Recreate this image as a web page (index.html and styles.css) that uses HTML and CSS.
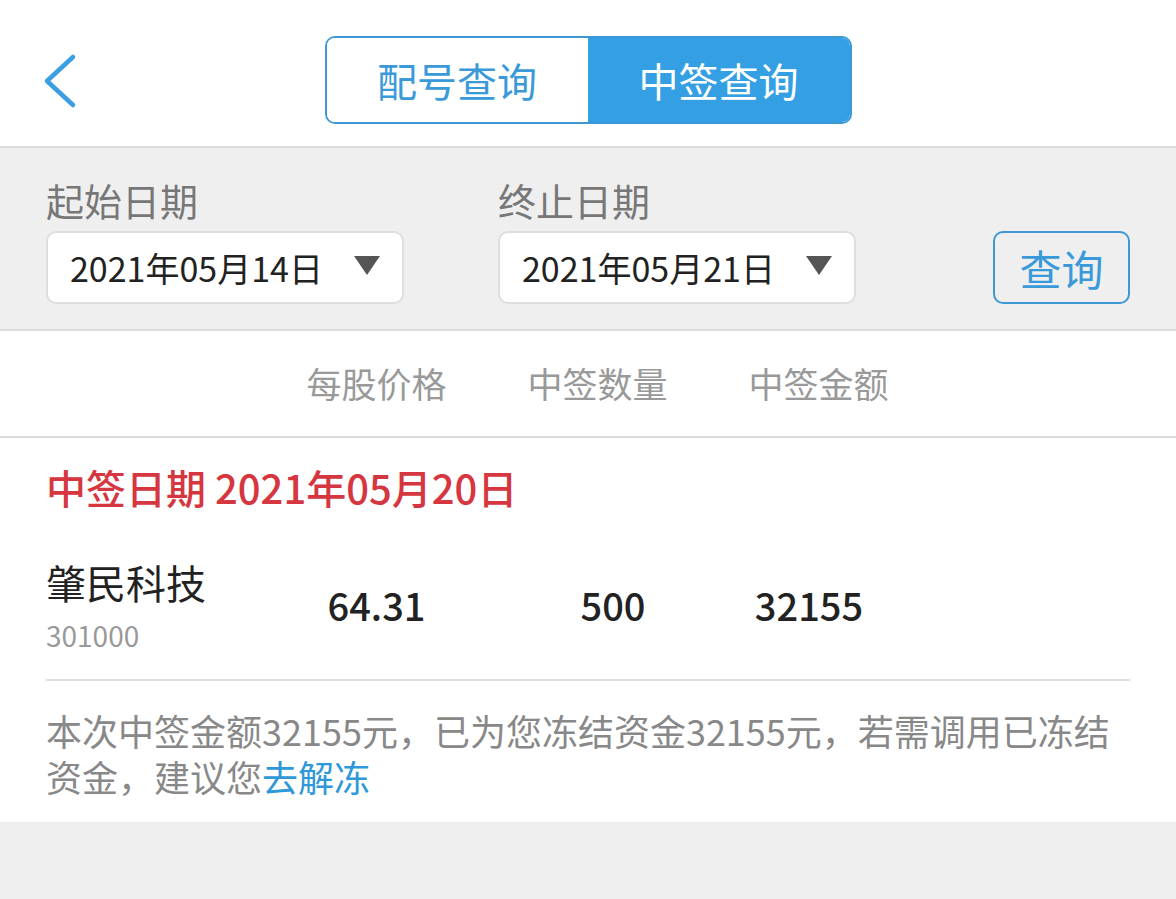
FILE: index.html
```html
<!DOCTYPE html>
<html lang="zh-CN">
<head>
<meta charset="utf-8">
<title>中签查询</title>
<link rel="stylesheet" href="styles.css">
</head>
<body>
<div class="page">
  <header class="topbar">
    <div class="back">
      <svg width="36" height="56" viewBox="0 0 36 56"><polyline points="31,4 5,28 31,52" fill="none" stroke="#3a9ee2" stroke-width="4.5" stroke-linecap="round" stroke-linejoin="round"/></svg>
    </div>
    <div class="seg">
      <div class="seg-item">配号查询</div>
      <div class="seg-item active">中签查询</div>
    </div>
    <div></div>
  </header>

  <section class="filter">
    <div class="field">
      <div class="field-label">起始日期</div>
      <div class="date-box"><span>2021年05月14日</span><i class="tri"></i></div>
    </div>
    <div class="field">
      <div class="field-label">终止日期</div>
      <div class="date-box"><span>2021年05月21日</span><i class="tri"></i></div>
    </div>
    <div class="query-btn">查询</div>
  </section>

  <section class="cols">
    <div></div>
    <div class="col-h">每股价格</div>
    <div class="col-h">中签数量</div>
    <div class="col-h">中签金额</div>
  </section>

  <section class="result">
    <div class="result-date">中签日期 2021年05月20日</div>
    <div class="row">
      <div class="stock">
        <div class="stock-name">肇民科技</div>
        <div class="stock-code">301000</div>
      </div>
      <div class="num">64.31</div>
      <div class="num">500</div>
      <div class="num">32155</div>
    </div>
    <div class="divider"></div>
    <p class="note">本次中签金额32155元，已为您冻结资金32155元，若需调用已冻结资金，建议您<span class="link">去解冻</span></p>
  </section>
</div>
</body>
</html>
```

FILE: styles.css
```css
* { box-sizing: border-box; }
html, body { margin: 0; padding: 0; }
body {
  background: #efefef;
  font-family: "Noto Sans CJK SC", "Noto Sans", sans-serif;
  color: #222;
  width: 1176px;
  height: 899px;
  overflow: hidden;
}
.page { display: flex; flex-direction: column; }

.topbar {
  height: 148px;
  background: #fff;
  border-bottom: 2px solid #dcdcdc;
  display: grid;
  grid-template-columns: 1fr auto 1fr;
  align-items: start;
}
.back { padding: 53px 0 0 42px; display: flex; }
.back svg { display: block; }

.seg {
  display: flex;
  height: 88px;
  border: 2px solid #3d99d6;
  border-radius: 10px;
  overflow: hidden;
  margin-top: 36px;
}
.seg-item {
  width: 261px;
  display: flex;
  align-items: center;
  justify-content: center;
  font-size: 40px;
  color: #3a9ad9;
  background: #fff;
}
.seg-item.active { background: #349fe3; color: #fff; width: 262px; }

.filter {
  background: #efefef;
  border-bottom: 2px solid #dcdcdc;
  display: flex;
  align-items: flex-end;
  padding: 30px 46px 25px 46px;
  gap: 94px;
}
.field { display: flex; flex-direction: column; gap: 9px; }
.field-label {
  font-size: 38px;
  line-height: 44px;
  color: #777;
}
.date-box {
  width: 358px;
  height: 73px;
  background: #fff;
  border: 2px solid #dedede;
  border-radius: 10px;
  display: flex;
  align-items: center;
  justify-content: space-between;
  padding: 0 22px 0 22px;
  font-size: 34px;
  color: #222;
}
.tri {
  width: 0; height: 0;
  border-left: 13px solid transparent;
  border-right: 13px solid transparent;
  border-top: 19px solid #555;
  margin-top: -4px;
}
.query-btn {
  margin-left: auto;
  width: 137px;
  height: 73px;
  border: 2px solid #3d99d6;
  border-radius: 10px;
  display: flex;
  align-items: center;
  justify-content: center;
  font-size: 42px;
  color: #3a9ad9;
}

.cols {
  background: #fff;
  height: 107px;
  border-bottom: 2px solid #dcdcdc;
  display: grid;
  grid-template-columns: 220px 221px 221px 221px;
  padding-left: 46px;
  align-items: center;
}
.col-h {
  text-align: center;
  font-size: 35px;
  color: #999;
  padding-bottom: 2px;
}

.result {
  background: #fff;
  padding: 25px 46px 23px 46px;
}
.result-date {
  font-size: 40px;
  line-height: 48px;
  color: #d6363f;
  font-weight: 500;
}
.row {
  display: grid;
  grid-template-columns: 220px 221px 252px 140px;
  align-items: center;
  margin-top: 47px;
}
.stock { display: flex; flex-direction: column; gap: 12px; }
.stock-name { font-size: 40px; line-height: 48px; color: #222; }
.stock-code { font-size: 28px; line-height: 34px; color: #999; }
.num {
  text-align: center;
  font-size: 38px;
  font-weight: 500;
  color: #222;
  padding-bottom: 2px;
}
.divider {
  height: 2px;
  background: #dedede;
  margin-top: 27px;
}
.note {
  margin: 26px 0 0 0;
  font-size: 36px;
  line-height: 46px;
  color: #888;
}
.link { color: #2e98d8; }
```
